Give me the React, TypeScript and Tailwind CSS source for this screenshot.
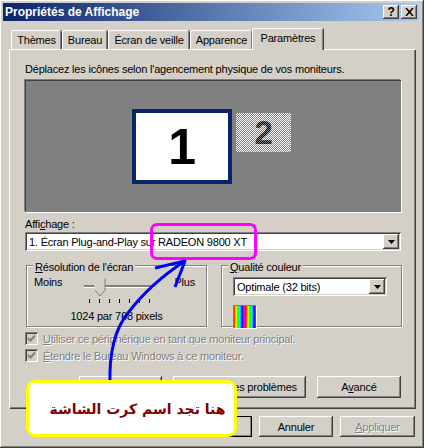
const raised =
  "shadow-[inset_-1px_-1px_0_#404040,inset_1px_1px_0_#fff,inset_-2px_-2px_0_#808080,inset_2px_2px_0_#d4d0c8]";
const sunken =
  "shadow-[inset_1px_1px_0_#808080,inset_-1px_-1px_0_#fff,inset_2px_2px_0_#404040,inset_-2px_-2px_0_#d4d0c8]";
const disabled = "text-[#808080] [text-shadow:1px_1px_0_#fff]";

const tabs = [
  { label: "Thèmes", width: "w-[50px]" },
  { label: "Bureau", width: "w-[45px]" },
  { label: "Écran de veille", width: "w-[81px]" },
  { label: "Apparence", width: "w-[62px]" },
];

const Arrow = () => (
  <div className={`flex h-[15px] w-[16px] items-center justify-center bg-[#d4d0c8] ${raised}`}>
    <svg width="7" height="4" viewBox="0 0 7 4">
      <path d="M0 0h7L3.5 4z" fill="#000" />
    </svg>
  </div>
);

const Combo = ({ children, className }: { children: React.ReactNode; className: string }) => (
  <div className={`flex items-center justify-between bg-white pl-[4px] pr-[2px] ${sunken} ${className}`}>
    <span>{children}</span>
    <Arrow />
  </div>
);

const Button = ({ children, className }: { children: React.ReactNode; className: string }) => (
  <div className={`flex items-center justify-center bg-[#d4d0c8] ${raised} ${className}`}>{children}</div>
);

const Group = ({ label, children }: { label: React.ReactNode; children: React.ReactNode }) => (
  <div className="relative h-[62px] w-[181px] border border-[#808080] shadow-[1px_1px_0_#fff,inset_1px_1px_0_#fff]">
    <span className="absolute left-[6px] top-[-6px] bg-[#d4d0c8] px-[2px]">{label}</span>
    {children}
  </div>
);

const Check = ({ children }: { children: React.ReactNode }) => (
  <div className="flex h-[13px] items-center gap-[5px]">
    <div className={`flex h-[13px] w-[13px] items-center justify-center bg-[#d4d0c8] ${sunken}`}>
      <svg width="9" height="9" viewBox="0 0 9 9">
        <path d="M1 4l2.5 2.5L8 1.5" fill="none" stroke="#808080" strokeWidth="2" />
      </svg>
    </div>
    <span className={disabled}>{children}</span>
  </div>
);

// Second monitor is a dithered ghost, so it is drawn with 1px patterns
const GhostMonitor = () => (
  <svg className="mt-[4px]" width="55" height="39" viewBox="0 0 55 39" shapeRendering="crispEdges">
    <defs>
      <pattern id="ghost" width="2" height="2" patternUnits="userSpaceOnUse">
        <rect width="2" height="2" fill="#fff" />
        <rect width="1" height="1" fill="#808080" />
        <rect x="1" y="1" width="1" height="1" fill="#808080" />
      </pattern>
      <pattern id="ghostDark" width="2" height="2" patternUnits="userSpaceOnUse">
        <rect width="2" height="2" fill="#808080" />
        <rect width="1" height="1" fill="#000" />
        <rect x="1" y="1" width="1" height="1" fill="#000" />
      </pattern>
    </defs>
    <rect width="55" height="39" fill="url(#ghost)" />
    <text
      x="27.5"
      y="31"
      textAnchor="middle"
      fontFamily="Liberation Sans"
      fontWeight="bold"
      fontSize="33"
      fill="url(#ghostDark)"
    >
      2
    </text>
  </svg>
);

export default function App() {
  return (
    <div className="relative h-[448px] w-[424px] overflow-hidden bg-[#d4d0c8] pl-[3px] pt-[3px] font-['Liberation_Sans',sans-serif] text-[11px] leading-[14px] tracking-[-0.2px] text-black shadow-[inset_-1px_-1px_0_#404040,inset_1px_1px_0_#fff,inset_-2px_-2px_0_#808080]">
      {/* Title bar */}
      <div className="flex h-[18px] w-[416px] items-center justify-between bg-[linear-gradient(to_right,#0a246a,#a6caf0)] pl-[2px] pr-[2px]">
        <span className="text-[12px] font-bold tracking-normal text-white">Propriétés de Affichage</span>
        <div className="flex gap-[2px]">
          <div className={`flex h-[14px] w-[16px] items-center justify-center bg-[#d4d0c8] text-[12px] font-bold ${raised}`}>?</div>
          <div className={`flex h-[14px] w-[16px] items-center justify-center bg-[#d4d0c8] ${raised}`}>
            <svg width="9" height="8" viewBox="0 0 9 8">
              <path d="M1 0l7 8M8 0L1 8" stroke="#000" strokeWidth="1.5" />
            </svg>
          </div>
        </div>
      </div>

      {/* Tabs */}
      <div className="ml-[8px] mt-[7px] flex h-[21px] items-end gap-[1px]">
        {tabs.map((tab) => (
          <div
            key={tab.label}
            className={`flex h-[19px] items-center justify-center rounded-t-[2px] border-l border-t border-white bg-[#d4d0c8] shadow-[inset_-1px_0_0_#808080,1px_0_0_#404040] ${tab.width}`}
          >
            {tab.label}
          </div>
        ))}
        <div className="relative z-10 -ml-[1px] mb-[-1px] flex h-[22px] w-[71px] items-start justify-center rounded-t-[2px] border-l border-t border-white bg-[#d4d0c8] pt-[2px] shadow-[inset_-1px_0_0_#808080,1px_0_0_#404040]">
          Paramètres
        </div>
      </div>

      {/* Panel */}
      <div className="ml-[6px] h-[359px] w-[406px] border-l border-t border-white pl-[15px] pt-[12px] shadow-[inset_-1px_-1px_0_#808080,1px_1px_0_#404040]">
        <p className="h-[18px]">Déplacez les icônes selon l'agencement physique de vos moniteurs.</p>

        <div className="flex h-[132px] w-[376px] items-start gap-[4px] bg-[#808080] pl-[107px] pt-[29px] shadow-[inset_1px_1px_0_#404040,-1px_-1px_0_#808080,1px_1px_0_#fff]">
          <div className="flex h-[75px] w-[100px] items-center justify-center border-[4px] border-[#0a246a] bg-white text-[50px] font-bold">
            1
          </div>
          <GhostMonitor />
        </div>

        <div className="mt-[5px] h-[15px]">
          Affi<span className="underline">c</span>hage :
        </div>
        <Combo className="h-[19px] w-[376px]">1. Écran Plug-and-Play sur RADEON 9800 XT</Combo>

        <div className="mt-[14px] flex gap-[14px] pl-[1px]">
          <Group label={<><span className="underline">R</span>ésolution de l'écran</>}>
            <div className="absolute left-[7px] top-[9px] flex w-[161px] justify-between">
              <span>Moins</span>
              <span>Plus</span>
            </div>
            <div className="absolute left-[57px] top-[19px] h-[2px] w-[71px] bg-[#808080] shadow-[0_1px_0_#fff]" />
            <svg className="absolute left-[67px] top-[11px]" width="12" height="20" viewBox="0 0 12 20">
              <path d="M1 1h10v12l-5 6-5-6z" fill="#d4d0c8" stroke="#808080" />
              <path d="M1 13V1h10" fill="none" stroke="#fff" />
            </svg>
            <div className="absolute left-[62px] top-[33px] flex w-[61px] justify-between">
              {[0, 1, 2, 3, 4, 5, 6].map((tick) => (
                <div key={tick} className="h-[4px] w-[1px] bg-black" />
              ))}
            </div>
            <div className="absolute inset-x-0 top-[43px] text-center">1024 par 768 pixels</div>
          </Group>
          <Group label={<><span className="underline">Q</span>ualité couleur</>}>
            <Combo className="absolute left-[11px] top-[11px] h-[19px] w-[154px]">Optimale (32 bits)</Combo>
            <div className="absolute left-[11px] top-[39px] h-[23px] w-[23px] border-l border-t border-[#808080] bg-[repeating-linear-gradient(to_right,#f00_0,#ff0_2px,#0f0_4px,#0ff_6px,#00f_8px,#f0f_10px,#f00_12px)] shadow-[1px_1px_0_#fff]" />
          </Group>
        </div>

        <div className="mt-[5px] flex flex-col gap-[4px]">
          <Check>
            <span className="underline">U</span>tiliser ce périphérique en tant que moniteur principal.
          </Check>
          <Check>
            <span className="underline">É</span>tendre le Bureau Windows à ce moniteur.
          </Check>
        </div>

        <div className="mt-[14px] flex h-[22px] gap-[11px] pl-[54px]">
          <Button className="w-[83px]">Identifier</Button>
          <Button className="w-[133px]">Résoudre les problèmes</Button>
          <Button className="w-[84px]">
            <span>
              A<span className="underline">v</span>ancé
            </span>
          </Button>
        </div>
      </div>

      {/* Dialog buttons */}
      <div className="ml-[175px] mt-[8px] flex h-[21px] gap-[7px]">
        <Button className="w-[74px] outline outline-1 -outline-offset-1 outline-black">OK</Button>
        <Button className="w-[74px]">Annuler</Button>
        <Button className={`w-[75px] ${disabled}`}>
          <span>
            <span className="underline">A</span>ppliquer
          </span>
        </Button>
      </div>

      {/* Annotation drawn over the dialog */}
      <div className="absolute left-[150px] top-[223px] h-[37px] w-[107px] rounded-[7px] border-[3px] border-[#ff00ff]" />
      <svg className="absolute left-0 top-0" width="424" height="448" viewBox="0 0 424 448">
        <path
          d="M110 385C109 355 114 330 128 313C143 293 162 276 185 261M155 268L185 261L175 287"
          fill="none"
          stroke="#0000ff"
          strokeWidth="3"
          strokeLinejoin="round"
        />
      </svg>
      <div
        dir="rtl"
        className="absolute left-[26px] top-[380px] flex h-[57px] w-[211px] items-center justify-center rounded-[9px] border-[3px] border-[#ffff00] bg-white pl-[12px] font-['DejaVu_Sans',sans-serif] text-[14px] font-bold tracking-normal text-[#800000]"
      >
        هنا تجد اسم كرت الشاشة
      </div>
    </div>
  );
}
